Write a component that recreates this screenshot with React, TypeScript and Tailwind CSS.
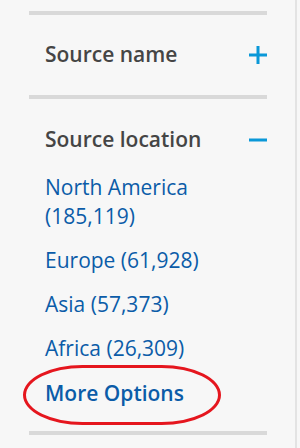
const regions = [
  { name: 'North America', count: '185,119' },
  { name: 'Europe', count: '61,928' },
  { name: 'Asia', count: '57,373' },
  { name: 'Africa', count: '26,309' },
];

function PlusIcon() {
  return (
    <svg width="18" height="18" viewBox="0 0 18 18" className="block">
      <rect x="0" y="7.5" width="18" height="3" fill="#0a98d8" />
      <rect x="7.5" y="0" width="3" height="18" fill="#0a98d8" />
    </svg>
  );
}

function MinusIcon() {
  return (
    <svg width="18" height="18" viewBox="0 0 18 18" className="block">
      <rect x="0" y="7.5" width="18" height="3" fill="#0a98d8" />
    </svg>
  );
}

function Divider() {
  return <div className="h-[4px] w-full bg-[#d9d9d9]" />;
}

export default function App() {
  return (
    <div className="flex h-[448px] w-[300px] bg-[#f7f7f7] font-['Open_Sans',sans-serif]">
      <div className="h-full w-[297px] border-r-2 border-[#e3e3e3]">
        <div className="ml-[29px] w-[238px] pt-[11px]">
          <Divider />
          <div className="flex items-center justify-between pb-[26px] pl-4 pt-[25px]">
            <span className="text-[21px] font-semibold leading-[29px] text-[#454545]">Source name</span>
            <PlusIcon />
          </div>
          <Divider />
          <div className="flex items-center justify-between pl-4 pt-[26px]">
            <span className="text-[21px] font-semibold leading-[29px] text-[#454545]">Source location</span>
            <MinusIcon />
          </div>
          <ul className="flex flex-col gap-[15px] pl-4 pr-10 pt-[19px] text-[21px] leading-[29px] text-[#0b5ca8]">
            {regions.map((r) => (
              <li key={r.name}>
                {r.name} ({r.count})
              </li>
            ))}
            <li className="relative mt-[1px] font-semibold">
              More Options
              <div className="absolute left-[-22px] top-[-14px] h-[60px] w-[198px] rounded-[30%/50%] border-[3px] border-[#e5161e]" />
            </li>
          </ul>
          <div className="mt-[23px]">
            <Divider />
          </div>
        </div>
      </div>
    </div>
  );
}
